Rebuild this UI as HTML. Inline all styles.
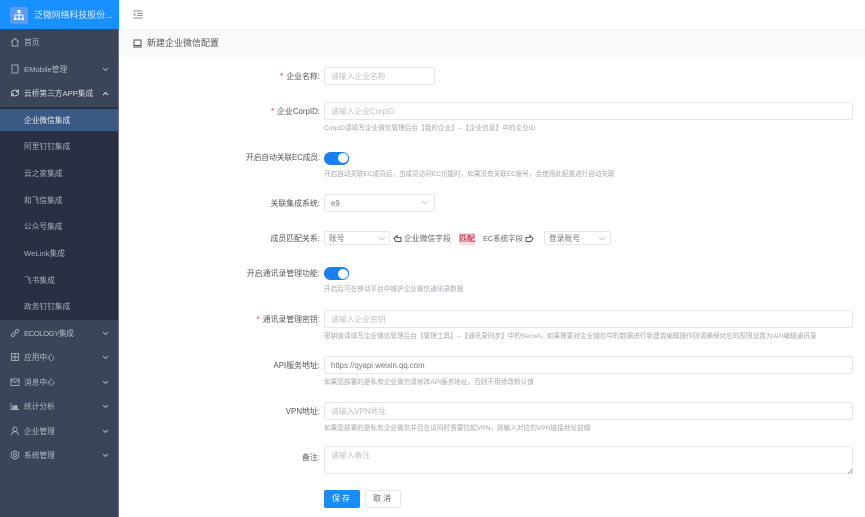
<!DOCTYPE html>
<html lang="zh-CN"><head><meta charset="utf-8"><title>新建企业微信配置</title>
<style>
html,body{margin:0;padding:0;width:865px;height:517px;overflow:hidden;background:#fff;font-family:"Liberation Sans","Noto Sans CJK SC",sans-serif;}
#w{position:absolute;left:0;top:0;width:865px;height:517px;overflow:hidden;filter:blur(.35px);}
.a{position:absolute;white-space:nowrap;}
#side{left:0;top:0;width:118px;height:517px;background:#3a4559;border-right:1px solid #6b7280;box-sizing:content-box;}
#logo{left:0;top:0;width:119px;height:29px;background:#1890ff;}
#sub{left:0;top:107px;width:118px;height:213px;background:#2a3044;}
#act{left:0;top:109px;width:118px;height:22px;background:#3a5a85;}
.m{left:24px;font-size:7.7px;line-height:12px;color:#b4bac4;}
.s{left:24px;font-size:7.7px;line-height:12px;color:#a9aebb;}
.ic{left:10px;width:10px;height:10px;fill:none;stroke:#aab0bb;stroke-width:.9;}
.ch{left:102px;width:7px;height:5px;fill:none;stroke:#a9b0bb;stroke-width:.9;}
.l{right:545px;font-size:7.9px;line-height:12px;color:#555;}
.l b{color:#e0334c;font-weight:400;margin-right:3px;}
.i{left:324px;box-sizing:border-box;border:1px solid #e4e6ea;border-radius:2px;background:#fff;font-size:7.8px;color:#bcbfc5;padding:0 6px;height:18px;line-height:18px;}
.h{left:324px;font-size:6.65px;line-height:10px;color:#a3a6ab;}
.sw{left:324px;width:25px;height:13px;border-radius:7px;background:#1a7ff0;}
.sw i{position:absolute;right:1.5px;top:1.5px;width:10px;height:10px;border-radius:50%;background:#fff;}
.ar{width:8px;height:5px;fill:none;stroke:#bfc3c9;stroke-width:.8;}
</style></head><body>
<div id="w">
<div class="a" id="side"></div>
<div class="a" id="logo"></div>
<div class="a" style="left:10px;top:7px;width:18px;height:17px;border-radius:2px;background:#5b9bf0;"></div>
<svg class="a" style="left:12px;top:9px;" width="14" height="13" viewBox="0 0 14 13" fill="#fff"><rect x="5.5" y="1" width="3" height="3"/><rect x="2" y="8.5" width="2.6" height="2.6"/><rect x="5.7" y="8.5" width="2.6" height="2.6"/><rect x="9.4" y="8.5" width="2.6" height="2.6"/><path d="M3 8V6h8v2M7 4v4" fill="none" stroke="#fff" stroke-width=".9"/></svg>
<div class="a" style="left:34px;top:9px;font-size:8.9px;line-height:13px;color:#d8ecff;">泛微网络科技股份...</div>
<div class="a" id="sub"></div>
<div class="a" id="act"></div>

<svg class="a ic" style="top:37px" viewBox="0 0 10 10"><path d="M1 5 5 1.500 9 5M2.200 4.500V9h5.600V4.500"/></svg>
<div class="a m" style="top:37px">首页</div>
<svg class="a ic" style="top:64px" viewBox="0 0 10 10"><rect x="2" y="1" width="6" height="8"/></svg>
<div class="a m" style="top:64px">EMobile管理</div>
<svg class="a ch" style="top:67px" viewBox="0 0 7 5"><path d="M1 1l2.500 2.500L6 1"/></svg>
<svg class="a ic" style="top:88px;stroke:#d0d4da" viewBox="0 0 10 10"><path d="M1.500 5a3.500 3 0 0 1 6-2l1 1M8.500 5a3.500 3 0 0 1-6 2l-1-1M8.500 1.500V4H6M1.500 8.500V6H4"/></svg>
<div class="a m" style="top:88px;color:#d5d8de">云桥第三方APP集成</div>
<svg class="a ch" style="top:91px;stroke:#e6e8ec" viewBox="0 0 7 5"><path d="M1 4l2.500-2.500L6 4"/></svg>
<div class="a s" style="top:115px;color:#e8ecf2">企业微信集成</div>
<div class="a s" style="top:141px">阿里钉钉集成</div>
<div class="a s" style="top:168px">云之家集成</div>
<div class="a s" style="top:195px">和飞信集成</div>
<div class="a s" style="top:221px">公众号集成</div>
<div class="a s" style="top:248px">WeLink集成</div>
<div class="a s" style="top:275px">飞书集成</div>
<div class="a s" style="top:301px">政务钉钉集成</div>
<svg class="a ic" style="top:328px" viewBox="0 0 10 10"><path d="M4 6 6 4M3.500 4.500 1.800 6.200a1.400 1.400 0 0 0 2 2L5.500 6.500M4.500 3.500 6.200 1.800a1.400 1.400 0 0 1 2 2L6.500 5.500"/></svg>
<div class="a m" style="top:328px;letter-spacing:-.45px">ECOLOGY集成</div>
<svg class="a ch" style="top:331px" viewBox="0 0 7 5"><path d="M1 1l2.500 2.500L6 1"/></svg>
<svg class="a ic" style="top:352px" viewBox="0 0 10 10"><rect x="1.500" y="1.500" width="7" height="7"/><path d="M1.500 5h7M5 1.500v7"/></svg>
<div class="a m" style="top:352px">应用中心</div>
<svg class="a ch" style="top:355px" viewBox="0 0 7 5"><path d="M1 1l2.500 2.500L6 1"/></svg>
<svg class="a ic" style="top:377px" viewBox="0 0 10 10"><rect x="1" y="2" width="8" height="6.500"/><path d="M1 3l4 2.500L9 3"/></svg>
<div class="a m" style="top:377px">消息中心</div>
<svg class="a ch" style="top:380px" viewBox="0 0 7 5"><path d="M1 1l2.500 2.500L6 1"/></svg>
<svg class="a ic" style="top:401px" viewBox="0 0 10 10"><path d="M1 2v6.500h8" /><path d="M3 8V5h1.500v3M5.500 8V4.500H7V8" fill="#b4bac4"/></svg>
<div class="a m" style="top:401px">统计分析</div>
<svg class="a ch" style="top:404px" viewBox="0 0 7 5"><path d="M1 1l2.500 2.500L6 1"/></svg>
<svg class="a ic" style="top:426px" viewBox="0 0 10 10"><circle cx="5" cy="3.300" r="2.200"/><path d="M1.500 9.200a3.500 3.500 0 0 1 7 0"/></svg>
<div class="a m" style="top:426px">企业管理</div>
<svg class="a ch" style="top:429px" viewBox="0 0 7 5"><path d="M1 1l2.500 2.500L6 1"/></svg>
<svg class="a ic" style="top:450px" viewBox="0 0 10 10"><path d="M5 .8 8.700 2.900V7.100L5 9.200 1.300 7.100V2.900Z"/><circle cx="5" cy="5" r="1.500"/></svg>
<div class="a m" style="top:450px">系统管理</div>
<svg class="a ch" style="top:453px" viewBox="0 0 7 5"><path d="M1 1l2.500 2.500L6 1"/></svg>

<svg class="a" style="left:133px;top:10px;" width="10" height="9" viewBox="0 0 10 9" fill="none" stroke="#8a8f96" stroke-width=".9"><path d="M.5 1h9M4 3.500h5.500M4 5.500h5.500M.5 8h9"/><path d="M2.500 3 .8 4.500 2.500 6"/></svg>
<div class="a" style="left:119px;top:29px;width:746px;height:28px;background:#f8f9fa;border-top:1px solid #f0f1f2;box-sizing:border-box;"></div>
<svg class="a" style="left:133px;top:39px;" width="9" height="9" viewBox="0 0 9 9" fill="none" stroke="#555" stroke-width="1"><rect x="1" y="1" width="7" height="5.500"/><path d="M0 8h9"/></svg>
<div class="a" style="left:147px;top:37px;font-size:9px;line-height:13px;color:#555;">新建企业微信配置</div>

<div class="a l" style="top:71px"><b>*</b>企业名称:</div>
<div class="a i" style="top:67px;width:111px">请输入企业名称</div>
<div class="a l" style="top:106px"><b>*</b>企业CorpID:</div>
<div class="a i" style="top:102px;width:529px">请输入企业CorpID</div>
<div class="a h" style="top:124px">CorpID请填写企业微信管理后台【我的企业】--【企业信息】中的企业ID</div>
<div class="a l" style="top:152px;letter-spacing:-.2px">开启自动关联EC成员:</div>
<div class="a sw" style="top:151.5px"><i></i></div>
<div class="a h" style="top:170px;letter-spacing:-.06px">开启自动关联EC成员后，当成员访问EC功能时，如果没有关联EC账号，会使用此配置进行自动关联</div>
<div class="a l" style="top:198px">关联集成系统:</div>
<div class="a i" style="top:194px;width:111px;color:#777">e9</div>
<svg class="a ar" style="left:421px;top:200px" viewBox="0 0 8 5"><path d="M1 1l3 3 3-3"/></svg>
<div class="a l" style="top:233px">成员匹配关系:</div>
<div class="a i" style="top:231px;width:66px;height:14px;line-height:14px;color:#777;padding:0 4px">账号</div>
<svg class="a ar" style="left:378px;top:236px" viewBox="0 0 8 5"><path d="M1 1l3 3 3-3"/></svg>
<svg class="a" style="left:393px;top:234px" width="9" height="9" viewBox="0 0 9 9" fill="none" stroke="#555" stroke-width="1"><path d="M1 4.500 4 1.500V3.500H8V7.500H3Z"/></svg>
<div class="a" style="left:404px;top:233px;font-size:7.8px;line-height:12px;color:#666">企业微信字段</div>
<div class="a" style="left:459px;top:233px;font-size:8px;line-height:12px;color:#c8394a;font-weight:700;background:#f6dfe2">匹配</div>
<div class="a" style="left:483px;top:233px;font-size:7.4px;line-height:12px;color:#666">EC系统字段</div>
<svg class="a" style="left:525px;top:234px" width="9" height="9" viewBox="0 0 9 9" fill="none" stroke="#555" stroke-width="1"><path d="M8 4.500 5 1.500V3.500H1V7.500H6Z"/></svg>
<div class="a i" style="left:544px;top:231px;width:67px;height:14px;line-height:14px;color:#777;padding:0 4px">登录账号</div>
<svg class="a ar" style="left:598px;top:236px" viewBox="0 0 8 5"><path d="M1 1l3 3 3-3"/></svg>
<div class="a l" style="top:268px">开启通讯录管理功能:</div>
<div class="a sw" style="top:267px"><i></i></div>
<div class="a h" style="top:285px">开启后可在移动平台中维护企业微信通讯录数据</div>
<div class="a l" style="top:314px"><b>*</b>通讯录管理密钥:</div>
<div class="a i" style="top:310px;width:529px">请输入企业密钥</div>
<div class="a h" style="top:332px">密钥值请填写企业微信管理后台【管理工具】--【通讯录同步】中的Secret，如果需要对企业微信中的数据进行新建或编辑操作则请确保对应的权限设置为API编辑通讯录</div>
<div class="a l" style="top:360px">API服务地址:</div>
<div class="a i" style="top:356px;width:529px;color:#777">https://qyapi.weixin.qq.com</div>
<div class="a h" style="top:378px">如果您部署的是私有企业微信请修改API服务地址，否则不用修改默认值</div>
<div class="a l" style="top:406px">VPN地址:</div>
<div class="a i" style="top:402px;width:529px">请输入VPN地址</div>
<div class="a h" style="top:424px">如果您部署的是私有企业微信并且在访问时需要拉起VPN，则输入对应的VPN链接地址前缀</div>
<div class="a l" style="top:452px">备注:</div>
<div class="a i" style="top:446px;width:529px;height:28px">请输入备注</div>
<svg class="a" style="left:847px;top:468px" width="6" height="6" viewBox="0 0 6 6" stroke="#888" stroke-width=".7"><path d="M1 5.500 5.500 1M3.500 5.500 5.500 3.500"/></svg>
<div class="a" style="left:324px;top:490px;width:36px;height:18px;border-radius:2px;background:#1a8cf5;color:#fff;font-size:8px;line-height:18px;text-align:center;letter-spacing:2px;">保存</div>
<div class="a" style="left:365px;top:490px;width:36px;height:18px;box-sizing:border-box;border:1px solid #e4e6ea;border-radius:2px;background:#fff;color:#666;font-size:8px;line-height:16px;text-align:center;letter-spacing:2px;">取消</div>
</div>
</body></html>
